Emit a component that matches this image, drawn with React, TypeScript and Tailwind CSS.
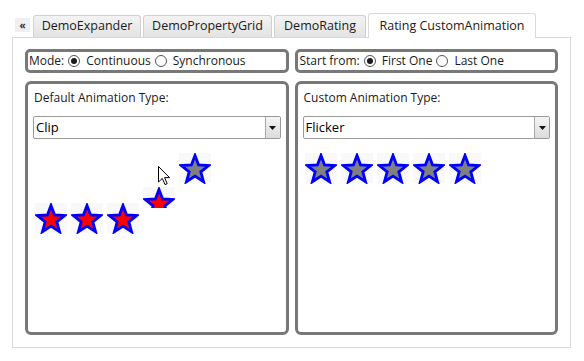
import React from 'react';

type StarProps = { filled?: boolean };

function Star({ filled }: StarProps) {
  return (
    <div className="w-[32px] h-[30px] bg-[#f9f9f9] flex items-start justify-center">
      <svg width="32" height="31" viewBox="0 0 33 31" className="shrink-0">
        <polygon
          points="16.5,2 20.2,11.9 30.8,12.4 22.5,19 25.3,29.1 16.5,23.3 7.7,29.1 10.5,19 2.2,12.4 12.8,11.9"
          fill={filled ? '#ff0000' : '#808080'}
          stroke="#0000ff"
          strokeWidth="2.9"
          strokeLinejoin="miter"
        />
      </svg>
    </div>
  );
}

function Radio({ checked, label }: { checked?: boolean; label: string }) {
  return (
    <label className="flex items-center">
      <span className="w-[12px] h-[12px] rounded-full border border-[#555] bg-white flex items-center justify-center">
        {checked && <span className="w-[6px] h-[6px] rounded-full bg-[#1a1a1a]" />}
      </span>
      <span className="ml-[6px]">{label}</span>
    </label>
  );
}

function Dropdown({ value }: { value: string }) {
  return (
    <div className="h-[23px] flex items-stretch border border-[#9a9a9a] rounded-[2px] bg-white">
      <div className="flex-1 flex items-center pl-[2px] text-[13px] text-black">{value}</div>
      <div className="w-[15px] border-l border-[#a8a8a8] bg-gradient-to-b from-[#f4f4f4] to-[#dcdcdc] flex items-center justify-center">
        <svg width="7" height="4" viewBox="0 0 7 4">
          <polygon points="0,0 7,0 3.5,4" fill="#111" />
        </svg>
      </div>
    </div>
  );
}

const tabs = [
  { label: 'DemoExpander', w: 'w-[108px]' },
  { label: 'DemoPropertyGrid', w: 'w-[129px]' },
  { label: 'DemoRating', w: 'w-[92px]' },
];

export default function App() {
  return (
    <div className="relative w-[584px] h-[361px] bg-white font-['Open_Sans',sans-serif] text-[12px] text-[#1b1b1b] pt-[13px] overflow-hidden">
      {/* Tab strip */}
      <div className="flex items-end h-[24px] pl-[15px] relative z-10">
        <div className="w-[15px] h-[14px] mb-[5px] mr-[3px] bg-[#efefef] flex items-center justify-center text-[10px] font-bold leading-none text-[#333]">
          «
        </div>
        {tabs.map((t) => (
          <div
            key={t.label}
            className={`${t.w} h-[22px] mr-[2px] border border-b-0 border-[#d0d0d0] rounded-t-[3px] bg-gradient-to-b from-[#f3f3f3] to-[#e3e3e3] flex items-center justify-center text-[12.5px]`}
          >
            {t.label}
          </div>
        ))}
        <div className="w-[168px] h-[25px] -mb-px border border-b-0 border-[#d9d9d9] rounded-t-[3px] bg-white flex items-center justify-center text-[12.5px]">
          Rating CustomAnimation
        </div>
      </div>

      {/* Tab content */}
      <div className="ml-[12px] w-[559px] h-[311px] border border-[#d9d9d9] pt-[11px] px-[12px] pb-[12px] flex flex-col gap-[8px]">
        <div className="grid grid-cols-2 gap-[6px] h-[24px]">
          <div className="border-[3px] border-[#787878] rounded-[5px] flex items-center gap-[4px] pl-[1px]">
            <span>Mode:</span>
            <Radio checked label="Continuous" />
            <Radio label="Synchronous" />
          </div>
          <div className="border-[3px] border-[#787878] rounded-[5px] flex items-center gap-[4px] pl-[2px]">
            <span>Start from:</span>
            <Radio checked label="First One" />
            <Radio label="Last One" />
          </div>
        </div>

        <div className="grid grid-cols-2 gap-[6px] flex-1">
          {/* Default animation panel */}
          <div className="border-[3px] border-[#787878] rounded-[6px] px-[5px] pt-[5px]">
            <div className="pl-[1px] h-[17px] leading-[17px]">Default Animation Type:</div>
            <div className="mt-[10px]">
              <Dropdown value="Clip" />
            </div>
            <div className="flex items-start gap-[4px] mt-[14px] pl-[2px]">
              <div className="mt-[50px]"><Star filled /></div>
              <div className="mt-[50px]"><Star filled /></div>
              <div className="mt-[50px]"><Star filled /></div>
              <div className="mt-[34px] h-[21px] overflow-hidden"><Star filled /></div>
              <div><Star /></div>
            </div>
          </div>

          {/* Custom animation panel */}
          <div className="border-[3px] border-[#787878] rounded-[6px] px-[5px] pt-[5px]">
            <div className="pl-[1px] h-[17px] leading-[17px]">Custom Animation Type:</div>
            <div className="mt-[10px]">
              <Dropdown value="Flicker" />
            </div>
            <div className="flex items-start gap-[4px] mt-[14px] pl-[2px]">
              <Star />
              <Star />
              <Star />
              <Star />
              <Star />
            </div>
          </div>
        </div>
      </div>

      {/* Mouse pointer */}
      <svg className="absolute left-[158px] top-[166px]" width="12" height="20" viewBox="0 0 12 20">
        <polygon points="0.5,0.5 0.5,16 4.3,12.4 7,18.6 9.2,17.7 6.6,11.6 11.5,11.6" fill="#fff" stroke="#000" strokeWidth="1" strokeLinejoin="miter" />
      </svg>
    </div>
  );
}
